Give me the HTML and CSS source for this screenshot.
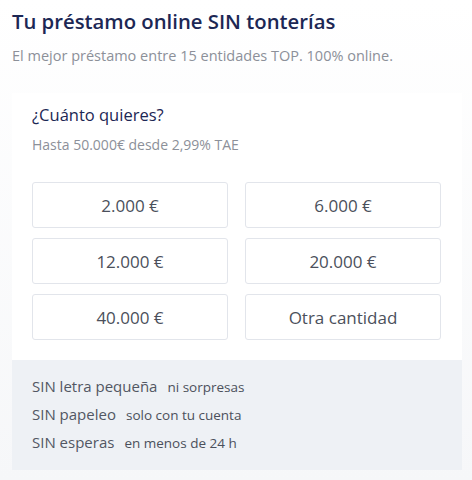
FILE: index.html
```html
<!DOCTYPE html>
<html lang="es">
<head>
<meta charset="utf-8">
<link rel="stylesheet" href="styles.css">
</head>
<body>
<div class="page">
  <h1 class="title">Tu préstamo online SIN tonterías</h1>
  <p class="subtitle">El mejor préstamo entre 15 entidades TOP. 100% online.</p>
  <div class="card">
    <div class="card-main">
      <h2 class="question">¿Cuánto quieres?</h2>
      <p class="hint">Hasta 50.000€ desde 2,99% TAE</p>
      <div class="grid">
        <button class="amount">2.000 €</button>
        <button class="amount">6.000 €</button>
        <button class="amount">12.000 €</button>
        <button class="amount">20.000 €</button>
        <button class="amount">40.000 €</button>
        <button class="amount">Otra cantidad</button>
      </div>
    </div>
    <ul class="perks">
      <li><span class="perk">SIN letra pequeña</span><span class="perk-note">ni sorpresas</span></li>
      <li><span class="perk">SIN papeleo</span><span class="perk-note">solo con tu cuenta</span></li>
      <li><span class="perk">SIN esperas</span><span class="perk-note">en menos de 24 h</span></li>
    </ul>
  </div>
</div>
</body>
</html>
```
FILE: styles.css
```css
* { box-sizing: border-box; }
html, body { margin: 0; padding: 0; }
body {
  background: linear-gradient(180deg, #ffffff 0%, #f6f7f9 100%);
  font-family: "Open Sans", Lato, sans-serif;
  height: 480px;
}
.page {
  padding: 6px 10px 0 12px;
}
.title {
  margin: 0;
  font-size: 20.3px;
  font-weight: 600;
  color: #1c2754;
  line-height: 30px;
}
.subtitle {
  margin: 9px 0 0;
  font-size: 14.5px;
  color: #8c9099;
  line-height: 22px;
}
.card {
  margin-top: 26px;
  background: #ffffff;
  width: 450px;
}
.card-main {
  padding: 11px 21px 20px 20px;
}
.question {
  margin: 0;
  font-size: 16.5px;
  font-weight: 500;
  color: #1c2754;
  line-height: 22px;
}
.hint {
  margin: 9px 0 0;
  font-size: 14px;
  color: #8c9099;
  line-height: 20px;
}
.grid {
  margin-top: 27px;
  display: grid;
  grid-template-columns: 196px 196px;
  column-gap: 17px;
  row-gap: 10px;
}
.amount {
  height: 46px;
  border: 1px solid #e2e5eb;
  border-radius: 3px;
  background: #ffffff;
  font-family: inherit;
  font-size: 17px;
  color: #4b505b;
  padding: 0;
}
.perks {
  list-style: none;
  margin: 0;
  padding: 12px 20px 14px 20px;
  background: #eef1f5;
}
.perks li {
  height: 28px;
  display: flex;
  align-items: baseline;
  padding-top: 4px;
  gap: 10px;
}
.perk {
  font-size: 15px;
  color: #525763;
}
.perk-note {
  font-size: 13.5px;
  color: #4b505b;
}
```
